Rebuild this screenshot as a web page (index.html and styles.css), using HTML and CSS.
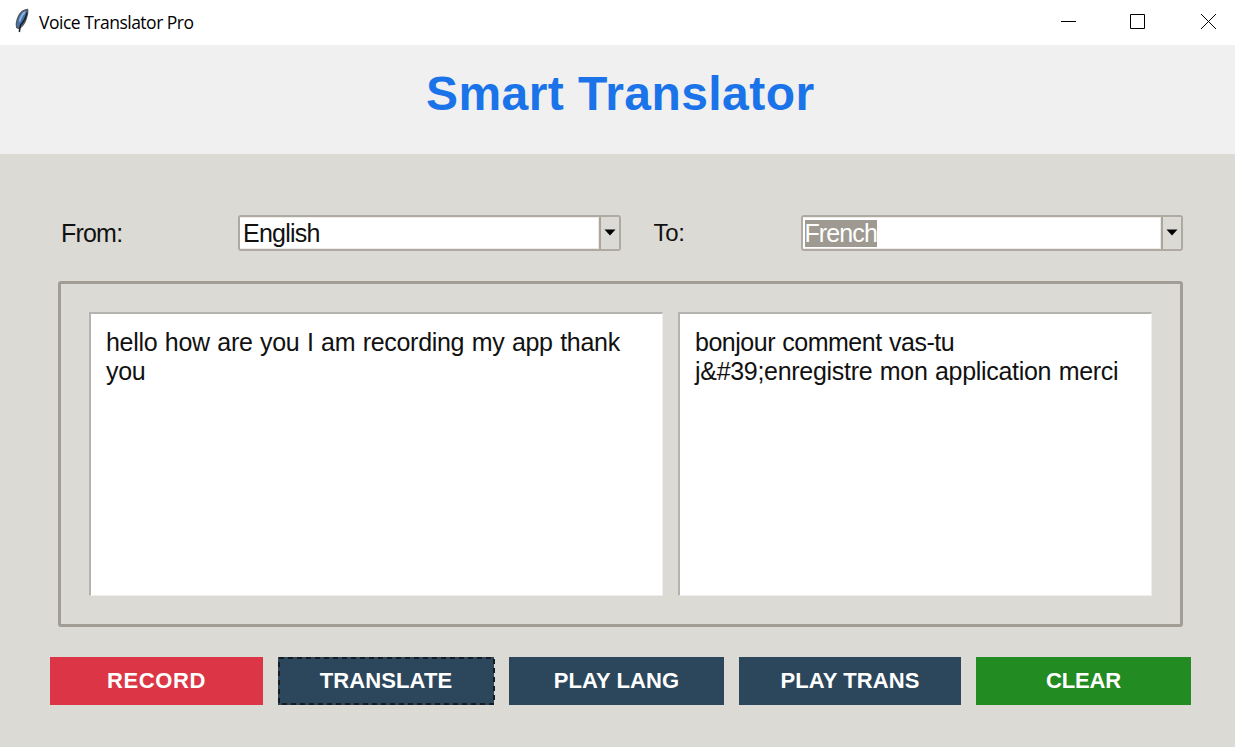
FILE: index.html
```html
<!DOCTYPE html>
<html lang="en">
<head>
<meta charset="utf-8">
<title>Voice Translator Pro</title>
<link rel="stylesheet" href="styles.css">
</head>
<body>
<div class="window">
  <div class="titlebar">
    <svg class="feather" width="16" height="26" viewBox="0 0 16 26">
      <path d="M13.500 1.500C9.500 1.800 6 5 4 9.500C2.600 13 2 16.500 2.800 19.500L4.800 20.500C8.500 18.500 11 14.500 12.200 10.500C13 7.500 14.200 4 13.500 1.500Z" fill="#4477b2" stroke="#55585c" stroke-width="1.500"/>
      <path d="M11 4C8.500 6 6.500 9.500 5.500 13.500" fill="none" stroke="#8db5e2" stroke-width="1.800"/>
      <path d="M13 4.500C12 9 9.500 14 6.500 17L5.300 24" fill="none" stroke="#1b1e24" stroke-width="1.500"/>
    </svg>
    <span class="caption">Voice Translator Pro</span>
    <svg class="controls" width="157" height="17" viewBox="0 0 157 17" fill="none" stroke="#000">
      <path d="M1 8.500H16M70.500 1.500H84.500V15.500H70.500Z"/>
      <path d="M141 1L156 16M156 1L141 16"/>
    </svg>
  </div>
  <header class="header"><h1 class="heading">Smart Translator</h1></header>
  <main class="main">
    <div class="languages">
      <label class="label label-from">From:</label>
      <div class="combo"><span class="field"><span class="value">English</span></span><span class="drop"><svg width="12" height="7" viewBox="0 0 12 7"><path d="M0.500 0.500H11.500L6 6.500Z"/></svg></span></div>
      <label class="label label-to">To:</label>
      <div class="combo"><span class="field"><span class="value selected">French</span></span><span class="drop"><svg width="12" height="7" viewBox="0 0 12 7"><path d="M0.500 0.500H11.500L6 6.500Z"/></svg></span></div>
    </div>
    <section class="panel">
      <div class="text source">hello how are you I am recording my app thank<br>you</div>
      <div class="text target"><span class="tight">bonjour comment vas-tu</span><br>j&amp;#39;enregistre mon application merci</div>
    </section>
    <div class="actions">
      <div class="button record">RECORD</div>
      <div class="button focused">TRANSLATE
        <svg class="focus" width="217" height="48" viewBox="0 0 217 48"><rect x="1" y="1" width="215" height="46" fill="none" stroke="#161c22" stroke-width="2" stroke-dasharray="5 4"/></svg>
      </div>
      <div class="button">PLAY LANG</div>
      <div class="button wide">PLAY TRANS</div>
      <div class="button clear">CLEAR</div>
    </div>
  </main>
</div>
</body>
</html>
```
FILE: styles.css
```css
* { box-sizing: border-box; }
body { margin: 0; font-family: "Liberation Sans", Arial, sans-serif; }
.window { width: 1235px; height: 747px; display: flex; flex-direction: column; overflow: hidden; background: #dcdad5; }
.titlebar { height: 45px; background: #fff; display: flex; align-items: center; padding: 0 18px 0 14px; flex: none; }
.feather { margin-top: -4px; }
.caption { margin: -2px 0 0 9px; font: 17.5px/24px "Open Sans", sans-serif; letter-spacing: -0.500px; color: #000; white-space: nowrap; }
.controls { margin-left: auto; margin-top: -3px; }
.header { height: 109px; background: #f0f0f0; flex: none; padding: 21px 0 0 426px; }
.heading { margin: 0; font-size: 48px; line-height: 56px; letter-spacing: 0.440px; color: #1a73e8; white-space: nowrap; }
.main { flex: 1; padding: 60px 44px 0 50px; }
.languages { display: flex; height: 37px; padding-left: 11px; align-items: center; }
.label { font-size: 25px; line-height: 36px; color: #111; white-space: nowrap; }
.label-from { width: 177px; letter-spacing: -0.800px; padding-top: 1px; }
.label-to { width: 147px; margin-left: 33px; font-size: 24px; letter-spacing: -0.300px; }
.combo { width: 382.500px; height: 36px; display: flex; border: 2px solid #aeaaa1; border-radius: 3px; flex: none; }
.field { flex: 1; background: #fff; padding: 2px 0 0 3px; border: 1px solid #eeebe7; border-width: 1px 1px 1px 0; }
.value { display: inline-block; height: 27px; font-size: 25px; line-height: 27px; color: #111; letter-spacing: -0.750px; }
.selected { background: #9e9a91; color: #fff; letter-spacing: -0.900px; margin-left: -1px; }
.drop { width: 20px; border-left: 2px solid #aaa69d; display: flex; align-items: center; justify-content: center; background: #dcdad5; }
.panel { margin: 30px 0 0 8px; width: 1125px; height: 346px; border: 3px solid #a19d94; border-radius: 3px; display: flex; gap: 15px; padding: 28px 28px; }
.text { height: 284px; background: #fff; border: 1px solid #efeeeb; border-top: 2px solid #b4b3b0; border-left: 2px solid #b4b3b0; padding: 14px 15px; font-size: 25px; line-height: 29px; letter-spacing: -0.300px; word-spacing: 0.850px; color: #111; white-space: nowrap; }
.source { width: 574px; }
.target { width: 474px; }
.tight { letter-spacing: -0.490px; }
.actions { display: flex; margin-top: 30px; gap: 15px; }
.button { position: relative; width: 215px; height: 48px; display: flex; align-items: center; justify-content: center; background: #2c475c; color: #fff; font-size: 22px; font-weight: bold; letter-spacing: 0.100px; white-space: nowrap; flex: none; }
.record { width: 213px; background: #dc3545; letter-spacing: 0.600px; }
.clear { background: #228b22; letter-spacing: -0.200px; }
.focused { width: 216px; }
.wide { width: 222px; }
.focus { position: absolute; left: 0; top: 0; }
```
